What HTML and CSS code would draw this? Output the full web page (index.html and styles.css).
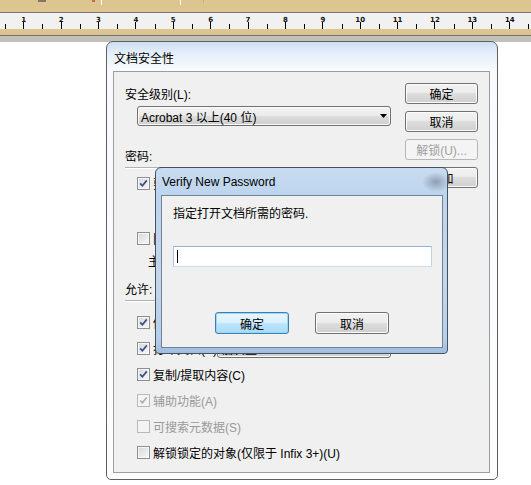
FILE: index.html
```html
<!DOCTYPE html>
<html lang="zh-CN">
<head>
  <meta charset="UTF-8">
  <title>文档安全性</title>
  <link rel="stylesheet" href="styles.css">
</head>
<body>

<!-- toolbar strip + ruler -->
<div class="toolbar">
  <span class="mark mark-gray"></span>
  <span class="mark mark-red"></span>
  <span class="mark mark-white"></span>
  <span class="mark mark-white mark-far"></span>
  <span class="mark mark-faint"></span>
</div>
<div class="ruler">
  <div class="scale">
    <div class="cell">1</div>
    <div class="cell">2</div>
    <div class="cell">3</div>
    <div class="cell">4</div>
    <div class="cell">5</div>
    <div class="cell">6</div>
    <div class="cell">7</div>
    <div class="cell">8</div>
    <div class="cell">9</div>
    <div class="cell">10</div>
    <div class="cell">11</div>
    <div class="cell">12</div>
    <div class="cell">13</div>
    <div class="cell">14</div>
    <div class="cell"></div>
  </div>
</div>
<div class="ruler-foot"></div>
<div class="ruler-shade"></div>

<!-- Document security dialog -->
<div class="window main-window">
  <div class="title">文档安全性</div>
  <div class="panel">
    <div class="left-col">
      <div class="text-row">安全级别(L):</div>
      <div class="select level-select">
        <span>Acrobat 3 以上(40 位)</span>
        <svg class="arrow" width="7" height="4" viewBox="0 0 7 4"><polygon points="0,0 7,0 3.5,4" fill="#000"/></svg>
      </div>

      <div class="text-row group-title">密码:</div>
      <div class="sep"></div>
      <div class="check-row first-check">
        <span class="cb"><svg width="11" height="11" viewBox="0 0 11 11"><path d="M2.2 5.4 L4.4 7.8 L8.8 2.4" stroke="#3a4c85" stroke-width="1.7" fill="none"/></svg></span>
        <span class="cb-label">要求密码才能打开文档(O)</span>
      </div>
      <div class="field-row open-row">
        <span class="field"></span>
      </div>
      <div class="check-row second-check">
        <span class="cb"></span>
        <span class="cb-label">限制编辑和打印(R)</span>
      </div>
      <div class="field-row master-row">
        <span>主密码:</span>
        <span class="field"></span>
      </div>

      <div class="text-row allow-title">允许:</div>
      <div class="sep"></div>
      <div class="perm-list">
        <div class="perm-row">
          <span class="cb"><svg width="11" height="11" viewBox="0 0 11 11"><path d="M2.2 5.4 L4.4 7.8 L8.8 2.4" stroke="#3a4c85" stroke-width="1.7" fill="none"/></svg></span>
          <span class="cb-label">修改文档(M)</span>
        </div>
        <div class="perm-row">
          <span class="cb"><svg width="11" height="11" viewBox="0 0 11 11"><path d="M2.2 5.4 L4.4 7.8 L8.8 2.4" stroke="#3a4c85" stroke-width="1.7" fill="none"/></svg></span>
          <span class="cb-label">打印文档(P)</span>
          <div class="select quality-select"><span>低质量</span></div>
        </div>
        <div class="perm-row">
          <span class="cb"><svg width="11" height="11" viewBox="0 0 11 11"><path d="M2.2 5.4 L4.4 7.8 L8.8 2.4" stroke="#3a4c85" stroke-width="1.7" fill="none"/></svg></span>
          <span class="cb-label">复制/提取内容(C)</span>
        </div>
        <div class="perm-row disabled">
          <span class="cb"><svg width="11" height="11" viewBox="0 0 11 11"><path d="M2.2 5.4 L4.4 7.8 L8.8 2.4" stroke="#a8a8a8" stroke-width="1.5" fill="none"/></svg></span>
          <span class="cb-label">辅助功能(A)</span>
        </div>
        <div class="perm-row disabled">
          <span class="cb"></span>
          <span class="cb-label">可搜索元数据(S)</span>
        </div>
        <div class="perm-row">
          <span class="cb"></span>
          <span class="cb-label">解锁锁定的对象(仅限于 Infix 3+)(U)</span>
        </div>
      </div>
    </div>

    <div class="btn-col">
      <button class="btn">确定</button>
      <button class="btn">取消</button>
      <button class="btn" disabled>解锁(U)...</button>
      <button class="btn">添加</button>
    </div>
  </div>
</div>

<!-- Verify New Password dialog (on top) -->
<div class="window verify-window">
  <div class="vtitle">Verify New Password</div>
  <div class="vbody">
    <div class="text-row">指定打开文档所需的密码.</div>
    <div class="pw-input"><span class="caret"></span></div>
    <div class="vbuttons">
      <button class="btn btn-default">确定</button>
      <button class="btn">取消</button>
    </div>
  </div>
</div>

</body>
</html>
```

FILE: styles.css
```css
body {
  margin: 0;
  width: 531px;
  height: 485px;
  overflow: hidden;
  position: relative;
  background: #fff;
  font-family: "Liberation Sans", "Noto Sans CJK SC", sans-serif;
  font-size: 12px;
  color: #000;
}

/* ---- toolbar strip and ruler ---- */
.toolbar {
  height: 12px;
  background: #dcc590;
  border-bottom: 1px solid #767676;
  display: flex;
  align-items: flex-start;
}

.mark {
  display: block;
}

.mark-gray {
  width: 8px;
  height: 2px;
  margin-left: 38px;
  background: #857660;
}

.mark-red {
  width: 3px;
  height: 2px;
  margin-left: 46px;
  background: #c86b4a;
}

.mark-white {
  width: 1px;
  height: 5px;
  margin-left: 6px;
  background: #fff;
}

.mark-far {
  margin-left: 78px;
}

.mark-faint {
  width: 1px;
  height: 3px;
  margin-left: 22px;
  background: #c8b07c;
}

.ruler {
  height: 16px;
  background: #f1f1f1;
  overflow: hidden;
}

.scale {
  display: flex;
  padding-left: 5px;
}

.cell {
  flex: 0 0 37.4px;
  height: 16px;
  box-sizing: border-box;
  padding-top: 4px;
  text-align: center;
  font-family: "DejaVu Sans", sans-serif;
  font-size: 7px;
  line-height: 7px;
  font-weight: bold;
  color: #111;
  background:
    linear-gradient(#000, #000) left bottom / 1px 5px no-repeat,
    linear-gradient(#000, #000) center bottom / 1px 7px no-repeat;
}

.ruler-foot {
  height: 6px;
  background: #dcc590;
  border-bottom: 1px solid #707070;
}

.ruler-shade {
  height: 6px;
  background: #c3c0b9;
}

/* ---- windows ---- */
.window {
  position: absolute;
  box-sizing: border-box;
  display: flex;
  flex-direction: column;
}

.main-window {
  left: 106px;
  top: 41px;
  width: 392px;
  height: 439px;
  border: 1px solid #5f5f5f;
  border-radius: 7px 7px 5px 5px;
  padding: 0 7px 6px 6px;
  background: linear-gradient(#cddff3, #e6eff9 12px, #f8fafd 28px, #fdfdfd);
}

.title {
  height: 29px;
  display: flex;
  align-items: center;
  padding-left: 1px;
  padding-top: 1px;
  box-sizing: border-box;
}

.panel {
  flex: 1;
  border: 1px solid #9d9d9d;
  background: #f0f0f0;
  display: grid;
  grid-template-columns: 266px 73px;
  column-gap: 14px;
  padding-left: 11px;
  align-items: start;
}

.left-col {
  padding-top: 15px;
}

.text-row {
  height: 16px;
  line-height: 16px;
  white-space: nowrap;
}

.group-title {
  margin-top: 23px;
}

.allow-title {
  margin-top: 12px;
}

.sep {
  margin-top: 2px;
  border-top: 1px solid #b2b2b2;
  border-bottom: 1px solid #fff;
}

/* select boxes */
.select {
  box-sizing: border-box;
  height: 20px;
  border: 1px solid #707070;
  border-radius: 3px;
  background: linear-gradient(#f2f2f2 0%, #ebebeb 50%, #dddddd 50%, #cfcfcf 100%);
  box-shadow: inset 0 0 0 1px #fbfbfb;
  display: flex;
  align-items: center;
  padding-left: 3px;
  white-space: nowrap;
  overflow: hidden;
}

.level-select {
  margin: 3px 0 0 12px;
  width: 254px;
}

.arrow {
  margin-left: auto;
  margin-right: 3px;
}

.quality-select {
  width: 180px;
  margin-left: auto;
}

/* checkboxes */
.check-row,
.perm-row {
  display: flex;
  align-items: center;
  padding-left: 12px;
  white-space: nowrap;
}

.check-row {
  height: 16px;
}

.first-check {
  margin-top: 6px;
}

.second-check {
  margin-top: 10px;
}

.perm-list {
  margin-top: 7px;
}

.perm-row {
  height: 26px;
}

.cb {
  flex: 0 0 13px;
  width: 13px;
  height: 13px;
  box-sizing: border-box;
  border: 1px solid #8e8f8f;
  background: linear-gradient(135deg, #d6d8dc, #f8f8f8);
  box-shadow: inset 0 0 0 1px #f6f6f6;
  display: flex;
  align-items: center;
  justify-content: center;
}

.cb svg {
  display: block;
}

.cb-label {
  margin-left: 3px;
}

.perm-row.disabled {
  color: #9a9a9a;
}

.perm-row.disabled .cb {
  border-color: #b8b8b8;
  background: #f4f4f4;
  box-shadow: none;
}

.field-row {
  display: flex;
  align-items: center;
  gap: 8px;
  height: 20px;
  padding-left: 23px;
  margin-top: 9px;
  white-space: nowrap;
}

.open-row {
  padding-left: 90px;
}

.master-row {
  margin-top: 4px;
}

.field {
  width: 150px;
  height: 20px;
  box-sizing: border-box;
  border: 1px solid #abadb3;
  background: #fff;
}

/* buttons */
.btn-col {
  padding-top: 11px;
  display: flex;
  flex-direction: column;
  gap: 7px;
}

.btn {
  box-sizing: border-box;
  width: 73px;
  height: 21px;
  padding: 0;
  border: 1px solid #707070;
  border-radius: 3px;
  background: linear-gradient(#f2f2f2 0%, #ebebeb 50%, #dddddd 50%, #cfcfcf 100%);
  box-shadow: inset 0 0 0 1px #fcfcfc;
  font-family: inherit;
  font-size: 12px;
  color: #000;
}

.btn:disabled {
  border-color: #b5b8ba;
  background: #f4f4f4;
  box-shadow: none;
  color: #a0a0a0;
}

/* ---- verify dialog ---- */
.verify-window {
  left: 155px;
  top: 167px;
  width: 293px;
  height: 187px;
  border: 1px solid #46515e;
  border-radius: 6px 6px 4px 4px;
  padding: 0 4px 5px 5px;
  background:
    radial-gradient(ellipse 14px 10px at 280px 14px, rgba(80, 90, 105, 0.45), rgba(80, 90, 105, 0)),
    linear-gradient(#c9dcf0, #bcd4ee 28px, #c4d6ea 60%, #b5cfeb 92%, #9fbde0);
}

.vtitle {
  height: 27px;
  display: flex;
  align-items: center;
  padding-left: 1px;
  padding-top: 1px;
  box-sizing: border-box;
  white-space: nowrap;
}

.vbody {
  flex: 1;
  border: 1px solid #6f8297;
  background: #f0f0f0;
  padding: 10px 11px 0 11px;
}

.pw-input {
  margin-top: 24px;
  width: 259px;
  height: 21px;
  box-sizing: border-box;
  border: 1px solid;
  border-color: #8fb2d6 #bcd3ea #c9dcee #a9c4e0;
  background: #fff;
  display: flex;
  align-items: center;
  padding-left: 3px;
}

.caret {
  width: 1px;
  height: 13px;
  background: #000;
}

.vbuttons {
  margin-top: 45px;
  display: flex;
  justify-content: center;
  gap: 26px;
}

.vbuttons .btn {
  width: 74px;
  height: 22px;
}

.btn-default {
  border-color: #3c7fb1;
  background: linear-gradient(#eaf6fd 0%, #d9f0fc 50%, #bee6fd 50%, #a7d9f5 100%);
  box-shadow: inset 0 0 0 1px #98d7f8;
}
```
